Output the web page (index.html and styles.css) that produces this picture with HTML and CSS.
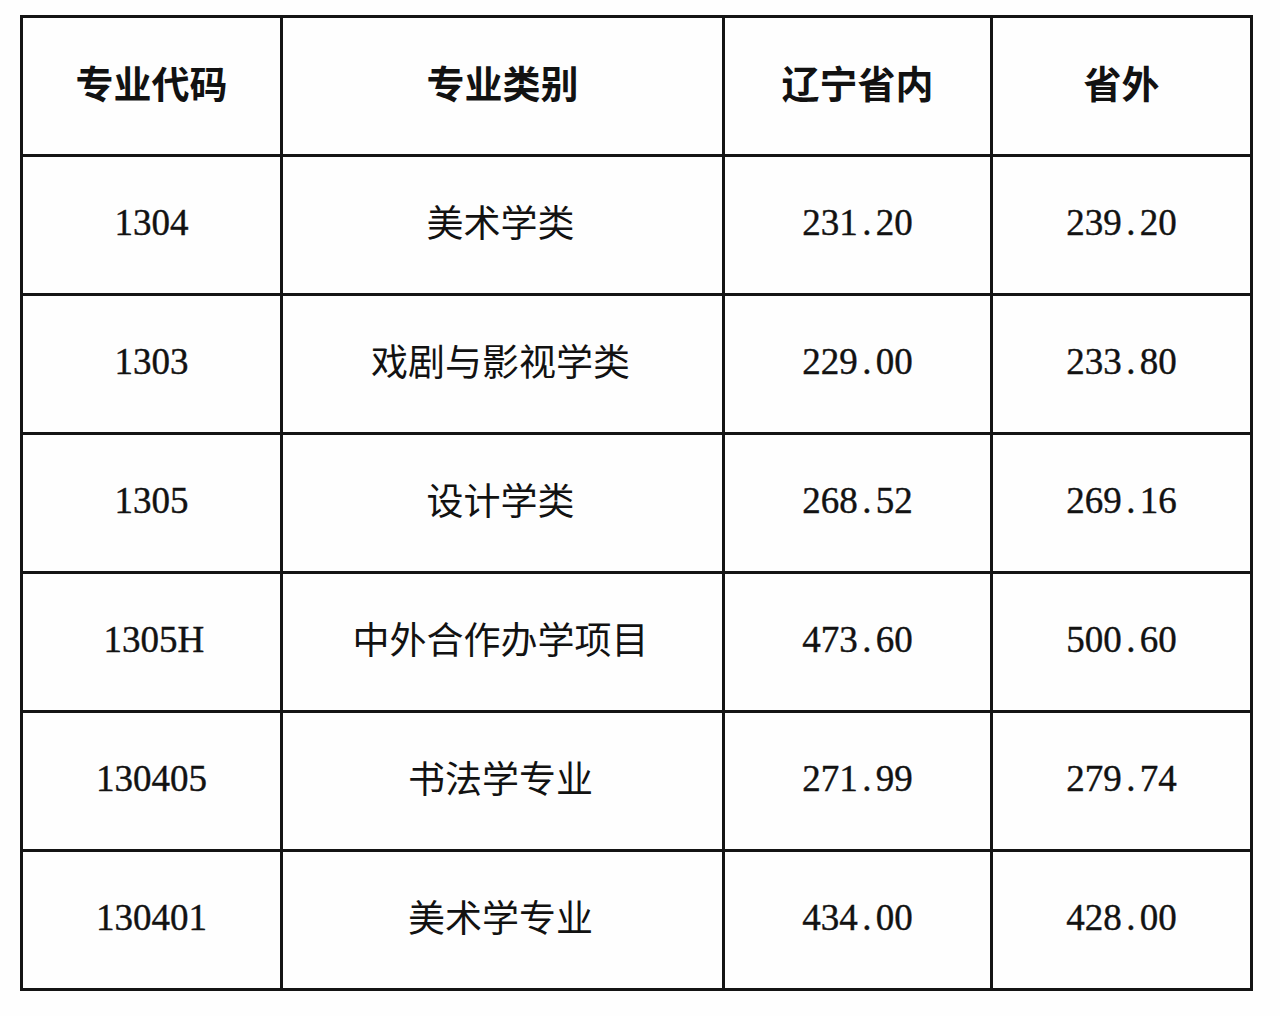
FILE: index.html
```html
<!DOCTYPE html>
<html lang="zh-CN">
<head>
<meta charset="utf-8">
<title>专业分数线</title>
<link rel="stylesheet" href="styles.css">
</head>
<body>
<div class="table">
  <div class="cell head">专业代码</div>
  <div class="cell head">专业类别</div>
  <div class="cell head">辽宁省内</div>
  <div class="cell head">省外</div>

  <div class="cell num">1304</div>
  <div class="cell zh">美术学类</div>
  <div class="cell num">231<span class="dot">.</span>20</div>
  <div class="cell num">239<span class="dot">.</span>20</div>

  <div class="cell num">1303</div>
  <div class="cell zh">戏剧与影视学类</div>
  <div class="cell num">229<span class="dot">.</span>00</div>
  <div class="cell num">233<span class="dot">.</span>80</div>

  <div class="cell num">1305</div>
  <div class="cell zh">设计学类</div>
  <div class="cell num">268<span class="dot">.</span>52</div>
  <div class="cell num">269<span class="dot">.</span>16</div>

  <div class="cell num">1305<span class="h">H</span></div>
  <div class="cell zh">中外合作办学项目</div>
  <div class="cell num">473<span class="dot">.</span>60</div>
  <div class="cell num">500<span class="dot">.</span>60</div>

  <div class="cell num">130405</div>
  <div class="cell zh">书法学专业</div>
  <div class="cell num">271<span class="dot">.</span>99</div>
  <div class="cell num">279<span class="dot">.</span>74</div>

  <div class="cell num">130401</div>
  <div class="cell zh">美术学专业</div>
  <div class="cell num">434<span class="dot">.</span>00</div>
  <div class="cell num">428<span class="dot">.</span>00</div>
</div>
</body>
</html>
```

FILE: styles.css
```css
html, body {
  margin: 0;
  padding: 0;
  background: #fefefe;
}

body {
  padding: 15px 0 0 20px;
}

.table {
  display: grid;
  grid-template-columns: 257px 439px 265px 257px;
  grid-auto-rows: 136px;
  gap: 3px;
  padding: 3px;
  background: #141414;
  width: max-content;
}

.cell {
  background: #fefefe;
  display: flex;
  align-items: center;
  justify-content: center;
  color: #121212;
}

.head {
  font-family: "Noto Sans CJK SC", sans-serif;
  font-weight: 700;
  font-size: 38px;
  padding-bottom: 10px;
}

.zh {
  font-family: "Noto Sans CJK SC", sans-serif;
  font-weight: 400;
  font-size: 37px;
  padding-bottom: 8px;
  padding-right: 4px;
}

.num {
  font-family: "Liberation Serif", serif;
  font-size: 37px;
  padding-bottom: 6px;
  -webkit-text-stroke: 0.4px #121212;
}

.dot {
  display: inline-block;
  width: 18px;
  text-align: center;
}

.h {
  display: inline-block;
  width: 22px;
  text-align: center;
}
```
